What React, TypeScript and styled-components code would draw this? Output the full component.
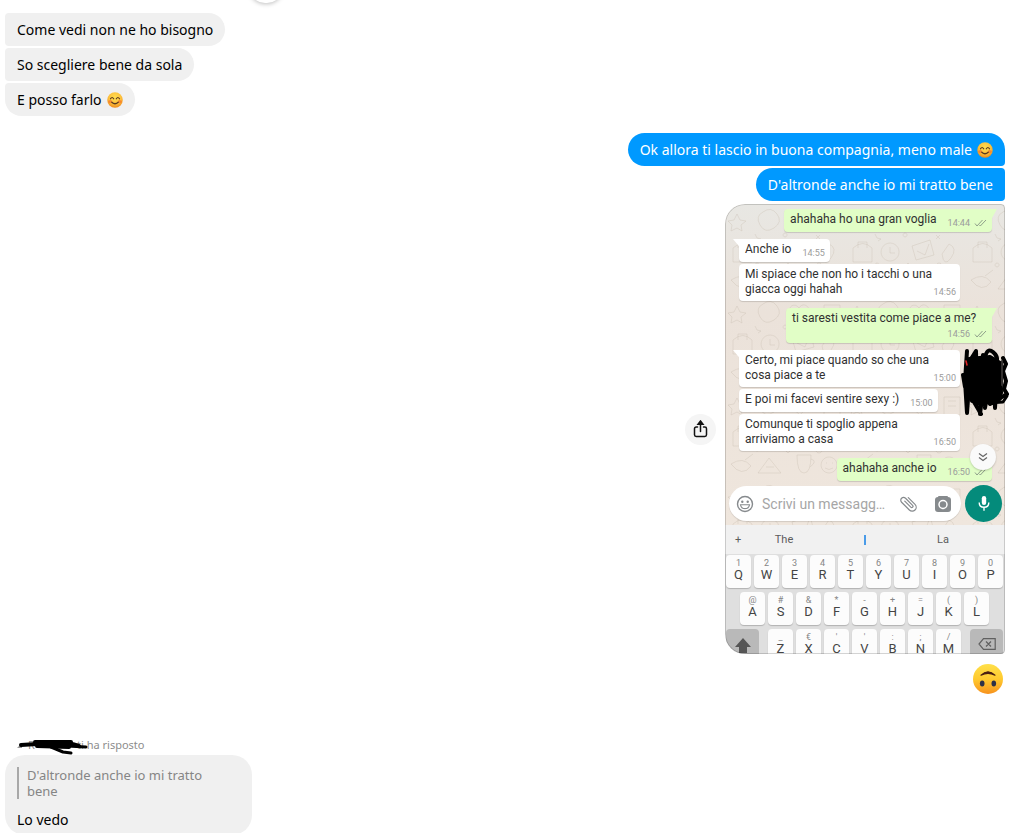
import React from "react";
import styled, { createGlobalStyle, css } from "styled-components";

const GlobalStyle = createGlobalStyle`
  * { box-sizing: border-box; }
  body {
    margin: 0;
    background: #fff;
    font-family: "Noto Sans", "Open Sans", sans-serif;
    overflow: hidden;
  }
  button, input { font: inherit; border: 0; padding: 0; margin: 0; }
`;

/* ---------- conversation ---------- */

const Page = styled.main`
  position: relative;
  display: flex;
  flex-direction: column;
  height: 100vh;
  overflow: hidden;
  padding: 13px 30px 0 5px;
`;

const FloatingChip = styled.div`
  position: absolute;
  top: -29px;
  left: 249px;
  width: 34px;
  height: 32px;
  border-radius: 16px;
  background: #fff;
  box-shadow: 0 1px 4px rgba(0, 0, 0, 0.25);
`;

const Group = styled.section<{ $mine?: boolean }>`
  display: flex;
  flex-direction: column;
  flex-shrink: 0;
  gap: 2px;
  align-items: ${(p) => (p.$mine ? "flex-end" : "flex-start")};
  margin-bottom: ${(p) => (p.$mine ? "43px" : "17px")};
`;

type Place = "first" | "middle" | "last";

const Bubble = styled.p<{ $mine?: boolean; $place: Place }>`
  display: flex;
  align-items: center;
  gap: 5px;
  margin: 0;
  padding: 0 12px;
  height: 33px;
  font-size: 14px;
  line-height: 20px;
  white-space: nowrap;
  color: ${(p) => (p.$mine ? "#fff" : "#000")};
  background: ${(p) => (p.$mine ? "#0099ff" : "#f0f0f0")};
  border-radius: ${(p) =>
    p.$mine
      ? p.$place === "first"
        ? "17px 17px 4px 17px"
        : "17px 4px 4px 17px"
      : p.$place === "last"
        ? "4px 17px 17px 17px"
        : "4px 17px 17px 4px"};
`;

const PhotoRow = styled.div`
  display: flex;
  align-items: center;
  gap: 9px;
  margin-top: 1px;
`;

const ShareButton = styled.button`
  display: grid;
  place-items: center;
  width: 31px;
  height: 31px;
  border-radius: 50%;
  background: #f5f5f5;
`;

const BigEmoji = styled.div`
  display: flex;
  margin: 8px 2px 0 0;
`;

const ReplyLabel = styled.div`
  position: relative;
  display: flex;
  align-items: center;
  height: 16px;
  padding-left: 12px;
  font-size: 11px;
  line-height: 16px;
  color: #8d8d8d;
`;

const HiddenName = styled.span`
  width: 60px;
  padding-left: 11px;
`;

const ReplyScribble = styled.svg`
  position: absolute;
  left: 12px;
  top: 0;
`;

const ReplyBubble = styled.article`
  width: 247px;
  padding: 12px 12px 5px;
  border-radius: 20px;
  background: #f0f0f0;
`;

const Quote = styled.blockquote`
  margin: 0 0 11px;
  padding: 0 24px 0 8px;
  border-left: 2px solid #a8a8a8;
  font-size: 13px;
  line-height: 16px;
  color: #858585;
`;

const ReplyText = styled.p`
  margin: 0;
  font-size: 14px;
  line-height: 20px;
  color: #000;
`;

/* ---------- shared phone screen ---------- */

const PhotoFrame = styled.div`
  position: relative;
`;

const Photo = styled.div`
  position: relative;
  display: flex;
  flex-direction: column;
  width: 280px;
  height: 450px;
  overflow: hidden;
  border-radius: 20px 4px 4px 20px;
  font-family: Roboto, sans-serif;

  &::after {
    content: "";
    position: absolute;
    inset: 0;
    border: 1px solid rgba(0, 0, 0, 0.16);
    border-radius: inherit;
    pointer-events: none;
  }
`;

const Wall = styled.div`
  position: relative;
  display: flex;
  flex-direction: column;
  flex-shrink: 0;
  padding: 5px 3px 3px 4px;
  background: linear-gradient(#e8e7e3, #ebe2da 34%, #efe6dd);
`;

const Doodles = styled.svg`
  position: absolute;
  inset: 0;
  width: 100%;
  height: 100%;
`;

const Message = styled.div<{ $out?: boolean; $tail?: boolean; $wide?: boolean; $stacked?: boolean; $gap: number }>`
  position: relative;
  display: ${(p) => (p.$stacked ? "block" : "grid")};
  grid-template-columns: ${(p) => (p.$wide ? "1fr" : "auto auto")};
  align-self: ${(p) => (p.$out ? "flex-end" : "flex-start")};
  width: ${(p) => (p.$wide ? "221px" : p.$stacked ? "206px" : "auto")};
  min-height: 23px;
  margin: 0 ${(p) => (p.$out ? "10px" : "0")} ${(p) => p.$gap}px ${(p) => (p.$out ? "0" : "10px")};
  padding: 3px 4px 4px 6px;
  border-radius: 4px;
  background: ${(p) => (p.$out ? "#e1fec6" : "#fff")};
  box-shadow: 0 1px 1px rgba(0, 0, 0, 0.15);
  font-size: 12px;
  line-height: 15px;
  color: #303030;

  ${(p) =>
    p.$tail &&
    css`
      &::before {
        content: "";
        position: absolute;
        top: 0;
        ${p.$out ? "right: -5px;" : "left: -6px;"}
        width: 10px;
        height: 9px;
        background: inherit;
        clip-path: ${p.$out ? "polygon(0 0, 100% 0, 50% 100%, 0 100%)" : "polygon(0 0, 100% 0, 100% 100%, 60% 80%)"};
      }
    `}
`;

const Words = styled.span`
  display: block;
  grid-row: 1;
  grid-column: 1;
  position: relative;
`;

const Stamp = styled.span<{ $over?: boolean; $stacked?: boolean }>`
  grid-row: 1;
  grid-column: ${(p) => (p.$over ? 1 : 2)};
  display: flex;
  justify-content: flex-end;
  align-items: center;
  align-self: end;
  justify-self: end;
  gap: 4px;
  margin: ${(p) => (p.$stacked ? "2px 0 -1px" : p.$over ? "0 0 -1px" : "0 0 -1px 11px")};
  padding-right: ${(p) => (p.$over ? "0" : "1px")};
  font-size: 9px;
  line-height: 12px;
  color: #9b9b9b;
`;

const JumpButton = styled.button`
  position: absolute;
  right: 9px;
  bottom: 55px;
  display: grid;
  place-items: center;
  width: 26px;
  height: 26px;
  border-radius: 50%;
  background: #fafafa;
  box-shadow: 0 1px 2px rgba(0, 0, 0, 0.2);
`;

const Composer = styled.form`
  position: relative;
  display: flex;
  align-items: center;
  gap: 4px;
`;

const Field = styled.label`
  display: flex;
  align-items: center;
  flex: 1;
  min-width: 0;
  height: 35px;
  padding: 0 10px 0 7px;
  border-radius: 18px;
  background: #fff;
  box-shadow: 0 1px 1px rgba(0, 0, 0, 0.12);
`;

const MessageInput = styled.input`
  flex: 1;
  min-width: 0;
  margin: 0 7px 0 8px;
  background: transparent;
  font-size: 14px;
  outline: 0;
  &::placeholder { color: #a6a6a6; opacity: 1; }
`;

const IconButton = styled.button`
  display: flex;
  background: none;
  & + & { margin-left: 17px; }
`;

const MicButton = styled.button`
  display: grid;
  place-items: center;
  width: 37px;
  height: 37px;
  border-radius: 50%;
  background: #048b7b;
`;

const Suggestions = styled.div`
  display: grid;
  grid-template-columns: 26px 66px 96px 60px;
  flex-shrink: 0;
  height: 29px;
  background: #f1f1f1;
`;

const Suggestion = styled.button`
  background: none;
  font-size: 11px;
  line-height: 28px;
  color: #5c5c5c;
`;

const Caret = styled.span`
  justify-self: center;
  align-self: center;
  width: 2px;
  height: 10px;
  background: #4a9be8;
`;

const Keyboard = styled.div`
  display: flex;
  flex-direction: column;
  flex-shrink: 0;
  gap: 4px;
  padding: 1px 2px 0 1px;
  background: #dfdfdf;
`;

const KeyRow = styled.div<{ $inset?: number }>`
  display: flex;
  justify-content: space-between;
  padding: 0 ${(p) => p.$inset ?? 0}px;
`;

const KeyCluster = styled.div`
  display: flex;
  gap: 3px;
`;

const Key = styled.button`
  display: flex;
  flex-direction: column;
  align-items: center;
  width: 25px;
  height: 33px;
  padding-top: 3px;
  border-radius: 4px;
  background: #fcfcfc;
  box-shadow: 0 1px 1px rgba(0, 0, 0, 0.2);
  color: #444;
  font-size: 13px;
  line-height: 14px;
`;

const Hint = styled.small`
  font-size: 9px;
  line-height: 10px;
  color: #858585;
`;

const ModifierKey = styled(Key)`
  width: 33px;
  padding-top: 9px;
  background: #b9b9b9;
  box-shadow: none;
`;

const Redaction = styled.svg`
  position: absolute;
  top: 143px;
  right: -5px;
`;

/* ---------- drawings ---------- */

const Blush = ({ size = 16 }: { size?: number }) => (
  <svg width={size} height={size} viewBox="0 0 32 32" role="img" aria-label="smiling face">
    <defs>
      <radialGradient id="blushFace" cx="50%" cy="35%" r="65%">
        <stop offset="0" stopColor="#ffdf52" />
        <stop offset="0.6" stopColor="#fdc23c" />
        <stop offset="1" stopColor="#f08a1c" />
      </radialGradient>
    </defs>
    <circle cx="16" cy="16" r="15.5" fill="url(#blushFace)" />
    <ellipse cx="6.5" cy="19" rx="4" ry="3" fill="#f7682c" opacity="0.6" />
    <ellipse cx="25.5" cy="19" rx="4" ry="3" fill="#f7682c" opacity="0.6" />
    <g fill="none" stroke="#5b3a20" strokeWidth="2.4" strokeLinecap="round">
      <path d="M7 13.5q3.2-5 6.4 0M18.6 13.5q3.2-5 6.4 0M9.5 20.5q6.500 6 13 0" />
    </g>
  </svg>
);

const UpsideDown = () => (
  <svg width="30" height="30" viewBox="0 0 30 30" role="img" aria-label="upside-down face">
    <defs>
      <linearGradient id="upFace" x1="0" y1="0" x2="0" y2="1">
        <stop offset="0" stopColor="#ffe04a" />
        <stop offset="0.5" stopColor="#ffca2f" />
        <stop offset="1" stopColor="#f7921e" />
      </linearGradient>
    </defs>
    <circle cx="15" cy="15" r="15" fill="url(#upFace)" />
    <path d="M8 11.200Q15 4.500 22 11.200Q15 7.500 8 11.200Z" fill="#4b1f12" stroke="#4b1f12" strokeWidth="1.200" strokeLinejoin="round" />
    <ellipse cx="9.200" cy="19.500" rx="2.300" ry="2.900" fill="#2e3148" />
    <ellipse cx="20.800" cy="19.500" rx="2.300" ry="2.900" fill="#2e3148" />
  </svg>
);

const ShareIcon = () => (
  <svg width="15" height="18" viewBox="0 0 15 18" fill="none" stroke="#111" strokeWidth="1.500" strokeLinecap="round">
    <path d="M4.500 7H3.200Q1.500 7 1.500 8.700V14.800Q1.500 16.500 3.200 16.500H11.800Q13.500 16.500 13.500 14.800V8.700Q13.500 7 11.800 7H10.500M7.500 11.500V3" />
    <path d="M7.500 1L10 4.300H5Z" fill="#111" />
  </svg>
);

const Ticks = () => (
  <svg width="13" height="8" viewBox="0 0 13 8" fill="none" stroke="#8fa08a" strokeWidth="1">
    <path d="M1 4.500L3 7L8.500 1M5.500 6L6.300 7L12 1" />
  </svg>
);

const doodleShapes =
  "M12 10l3 6 6 1-5 4 1 6-5-3-6 3 1-6-4-4 6-1zM38 8q8-6 14 2t-3 14-14-3 3-13zM74 12c-5-7-13 0-8 7l9 8 8-9c4-7-5-13-9-6zM99 9h16v18h-16zM103 13h8M103 18h8M8 44q10-9 19 0v14H8zM13 44v-6h9v6M45 39a9 9 0 1 0 .1 0M45 43v6h5M67 42l18-6 4 15-18 5zM72 47l8 4 4-11M104 40q9 4 2 14t-9-4zM6 76q12-8 20 2-9 12-20-2zM20 72l8-6M44 70l12 15H33zM41 79h8M72 67h14q0 18-7 18t-7-18zM86 71q7 2-1 8M104 69a8 8 0 1 0 .1 0M101 75h1M107 75h1M100 80q4 3 8 0M30 30l2 4 4 1-3 2M60 29a2 2 0 1 0 .1 0M91 31l4 4M95 31l-4 4M32 59a2 2 0 1 0 .1 0M60 62l3-3 3 3-3 3zM94 59a3 3 0 1 0 .1 0";

const Wallpaper = () => (
  <Doodles aria-hidden="true">
    <defs>
      <pattern id="doodles" width="120" height="92" patternUnits="userSpaceOnUse">
        <path d={doodleShapes} fill="none" stroke="#c9bdb0" strokeWidth="1" opacity="0.36" />
      </pattern>
    </defs>
    <rect width="100%" height="100%" fill="url(#doodles)" />
  </Doodles>
);

const ChevronsDown = () => (
  <svg width="10" height="10" viewBox="0 0 10 10" fill="none" stroke="#666" strokeWidth="1.200">
    <path d="M1 1.500L5 4.500L9 1.500M1 5.500L5 8.500L9 5.500" />
  </svg>
);

const SmileIcon = () => (
  <svg width="18" height="18" viewBox="0 0 18 18" fill="none" stroke="#868a8d" strokeWidth="1.400">
    <circle cx="9" cy="9" r="7.500" />
    <circle cx="6.300" cy="6.800" r="1.200" fill="#868a8d" stroke="none" />
    <circle cx="11.700" cy="6.800" r="1.200" fill="#868a8d" stroke="none" />
    <path d="M4.500 9.800H13.500Q12.800 13.600 9 13.600T4.500 9.800Z" strokeWidth="1.100" />
  </svg>
);

const ClipIcon = () => (
  <svg width="18" height="18" viewBox="0 0 18 18" fill="none" stroke="#868a8d" strokeWidth="1.200" strokeLinecap="round">
    <g transform="rotate(-45 9 9)">
      <path d="M13 4V13.500A4 4 0 0 1 5 13.500V2.500A2.800 2.800 0 0 1 10.600 2.500V12.500A1.300 1.300 0 0 1 8 12.500V4" />
    </g>
  </svg>
);

const CameraIcon = () => (
  <svg width="16" height="16" viewBox="0 0 16 16">
    <rect x="0" y="1" width="16" height="15" rx="3" fill="#868a8d" />
    <rect x="3" y="0" width="10" height="3" rx="1" fill="#868a8d" />
    <circle cx="8" cy="8.500" r="4" fill="none" stroke="#fff" strokeWidth="1.500" />
  </svg>
);

const MicIcon = () => (
  <svg width="12" height="17" viewBox="0 0 12 17">
    <rect x="3.800" y="1" width="4.400" height="9" rx="2.200" fill="#fff" />
    <path d="M1.200 7.500Q1.200 12.300 6 12.300T10.800 7.500M6 12.300V15.800" fill="none" stroke="#fff" strokeWidth="1.400" />
  </svg>
);

const ShiftIcon = () => (
  <svg width="16" height="15" viewBox="0 0 16 15" fill="#555">
    <path d="M8 0L16 9H12V15H4V9H0Z" />
  </svg>
);

const BackspaceIcon = () => (
  <svg width="18" height="12" viewBox="0 0 18 12" fill="none" stroke="#606060" strokeWidth="1.200">
    <path d="M5.500.7H17.200V11.300H5.500L1 6ZM8 3.500L13 8.500M13 3.500L8 8.500" />
  </svg>
);

/* ---------- content ---------- */

type Line = { words: string[]; time: string; gap: number; out?: boolean; tail?: boolean; stacked?: boolean };

const lines: Line[] = [
  { words: ["ahahaha ho una gran voglia"], time: "14:44", gap: 7, out: true, tail: true },
  { words: ["Anche io"], time: "14:55", gap: 2, tail: true },
  { words: ["Mi spiace che non ho i tacchi o una", "giacca oggi hahah"], time: "14:56", gap: 7 },
  { words: ["ti saresti vestita come piace a me?"], time: "14:56", gap: 7, out: true, tail: true, stacked: true },
  { words: ["Certo, mi piace quando so che una", "cosa piace a te"], time: "15:00", gap: 2, tail: true },
  { words: ["E poi mi facevi sentire sexy :)"], time: "15:00", gap: 2 },
  { words: ["Comunque ti spoglio appena", "arriviamo a casa"], time: "16:50", gap: 7 },
  { words: ["ahahaha anche io"], time: "16:50", gap: 4, out: true },
];

const keyRows = [
  ["1Q", "2W", "3E", "4R", "5T", "6Y", "7U", "8I", "9O", "0P"],
  ["@A", "#S", "&D", "*F", "-G", "+H", "=J", "(K", ")L"],
  ["_Z", "€X", "'C", "'V", ":B", ";N", "/M"],
];

const Keys = ({ items }: { items: string[] }) => (
  <KeyCluster>
    {items.map((k) => (
      <Key key={k} type="button">
        <Hint>{k[0]}</Hint>
        {k[1]}
      </Key>
    ))}
  </KeyCluster>
);

const PhoneScreen = () => (
  <Photo>
    <Wall>
      <Wallpaper />
      {lines.map((l, i) => {
        const wide = l.words.length > 1;
        return (
          <Message key={i} $out={l.out} $tail={l.tail} $wide={wide} $stacked={l.stacked} $gap={l.gap}>
            <Words>
              {l.words.map((w, n) => (
                <React.Fragment key={n}>
                  {n > 0 && <br />}
                  {w}
                </React.Fragment>
              ))}
            </Words>
            <Stamp $over={wide} $stacked={l.stacked}>
              {l.time}
              {l.out && <Ticks />}
            </Stamp>
          </Message>
        );
      })}
      <JumpButton type="button" aria-label="Vai in fondo">
        <ChevronsDown />
      </JumpButton>
      <Composer>
        <Field>
          <SmileIcon />
          <MessageInput aria-label="Scrivi un messaggio" placeholder="Scrivi un messagg…" />
          <IconButton type="button" aria-label="Allega">
            <ClipIcon />
          </IconButton>
          <IconButton type="button" aria-label="Fotocamera">
            <CameraIcon />
          </IconButton>
        </Field>
        <MicButton type="button" aria-label="Messaggio vocale">
          <MicIcon />
        </MicButton>
      </Composer>
    </Wall>
    <Suggestions>
      <Suggestion type="button">+</Suggestion>
      <Suggestion type="button">The</Suggestion>
      <Caret />
      <Suggestion type="button">La</Suggestion>
    </Suggestions>
    <Keyboard>
      <KeyRow>
        <Keys items={keyRows[0]} />
      </KeyRow>
      <KeyRow $inset={14}>
        <Keys items={keyRows[1]} />
      </KeyRow>
      <KeyRow>
        <ModifierKey type="button" aria-label="Maiuscole">
          <ShiftIcon />
        </ModifierKey>
        <Keys items={keyRows[2]} />
        <ModifierKey type="button" aria-label="Cancella">
          <BackspaceIcon />
        </ModifierKey>
      </KeyRow>
    </Keyboard>
  </Photo>
);

export default function App() {
  return (
    <>
      <GlobalStyle />
      <Page>
        <FloatingChip />
        <Group>
          <Bubble $place="first">Come vedi non ne ho bisogno</Bubble>
          <Bubble $place="middle">So scegliere bene da sola</Bubble>
          <Bubble $place="last">
            E posso farlo <Blush />
          </Bubble>
        </Group>
        <Group $mine>
          <Bubble $mine $place="first">
            Ok allora ti lascio in buona compagnia, meno male <Blush />
          </Bubble>
          <Bubble $mine $place="middle">
            D'altronde anche io mi tratto bene
          </Bubble>
          <PhotoRow>
            <ShareButton type="button" aria-label="Condividi">
              <ShareIcon />
            </ShareButton>
            <PhotoFrame>
              <PhoneScreen />
              <Redaction width="50" height="72" viewBox="0 0 50 72" fill="none" stroke="#000" strokeWidth="4" strokeLinecap="round" strokeLinejoin="round" aria-hidden="true">
                <path d="M9 12L30 10L40 16L41 46L34 54H12L7 36Z" fill="#000" />
                <path d="M7 4L5 34L7 66L11 12L16 4L17 57L23 8L20 67L27 12L25 61L33 14L35 61L38 16L40 52M3 28L5 40M25 11Q27 0 33 5T36 16M43 11L46 17L43 24L46 34L44 42L47 47L30 57M14 55L21 67" />
                <path d="M28 56L43 55L47 49L37 50" strokeWidth="3" />
                <path d="M6 14L7 18" stroke="#e32222" strokeWidth="1.500" />
                <path d="M42 14L42 38" stroke="#33302f" strokeWidth="2" />
              </Redaction>
            </PhotoFrame>
          </PhotoRow>
          <BigEmoji>
            <UpsideDown />
          </BigEmoji>
        </Group>
        <Group>
          <ReplyLabel>
            <HiddenName>R</HiddenName>
            ti ha risposto
            <ReplyScribble width="74" height="20" viewBox="0 0 74 20" fill="none" stroke="#000" strokeLinecap="round" strokeLinejoin="round" aria-hidden="true">
              <path d="M0 11L5 6V11Z" fill="#999" stroke="none" />
              <path d="M4 8L20 7L52 6L62 9M18 5L54 5M20 9L52 10" strokeWidth="4" />
              <path d="M34 10L46 15L54 16M50 9L69 10" strokeWidth="3" />
            </ReplyScribble>
          </ReplyLabel>
          <ReplyBubble>
            <Quote>D'altronde anche io mi tratto bene</Quote>
            <ReplyText>Lo vedo</ReplyText>
          </ReplyBubble>
        </Group>
      </Page>
    </>
  );
}
